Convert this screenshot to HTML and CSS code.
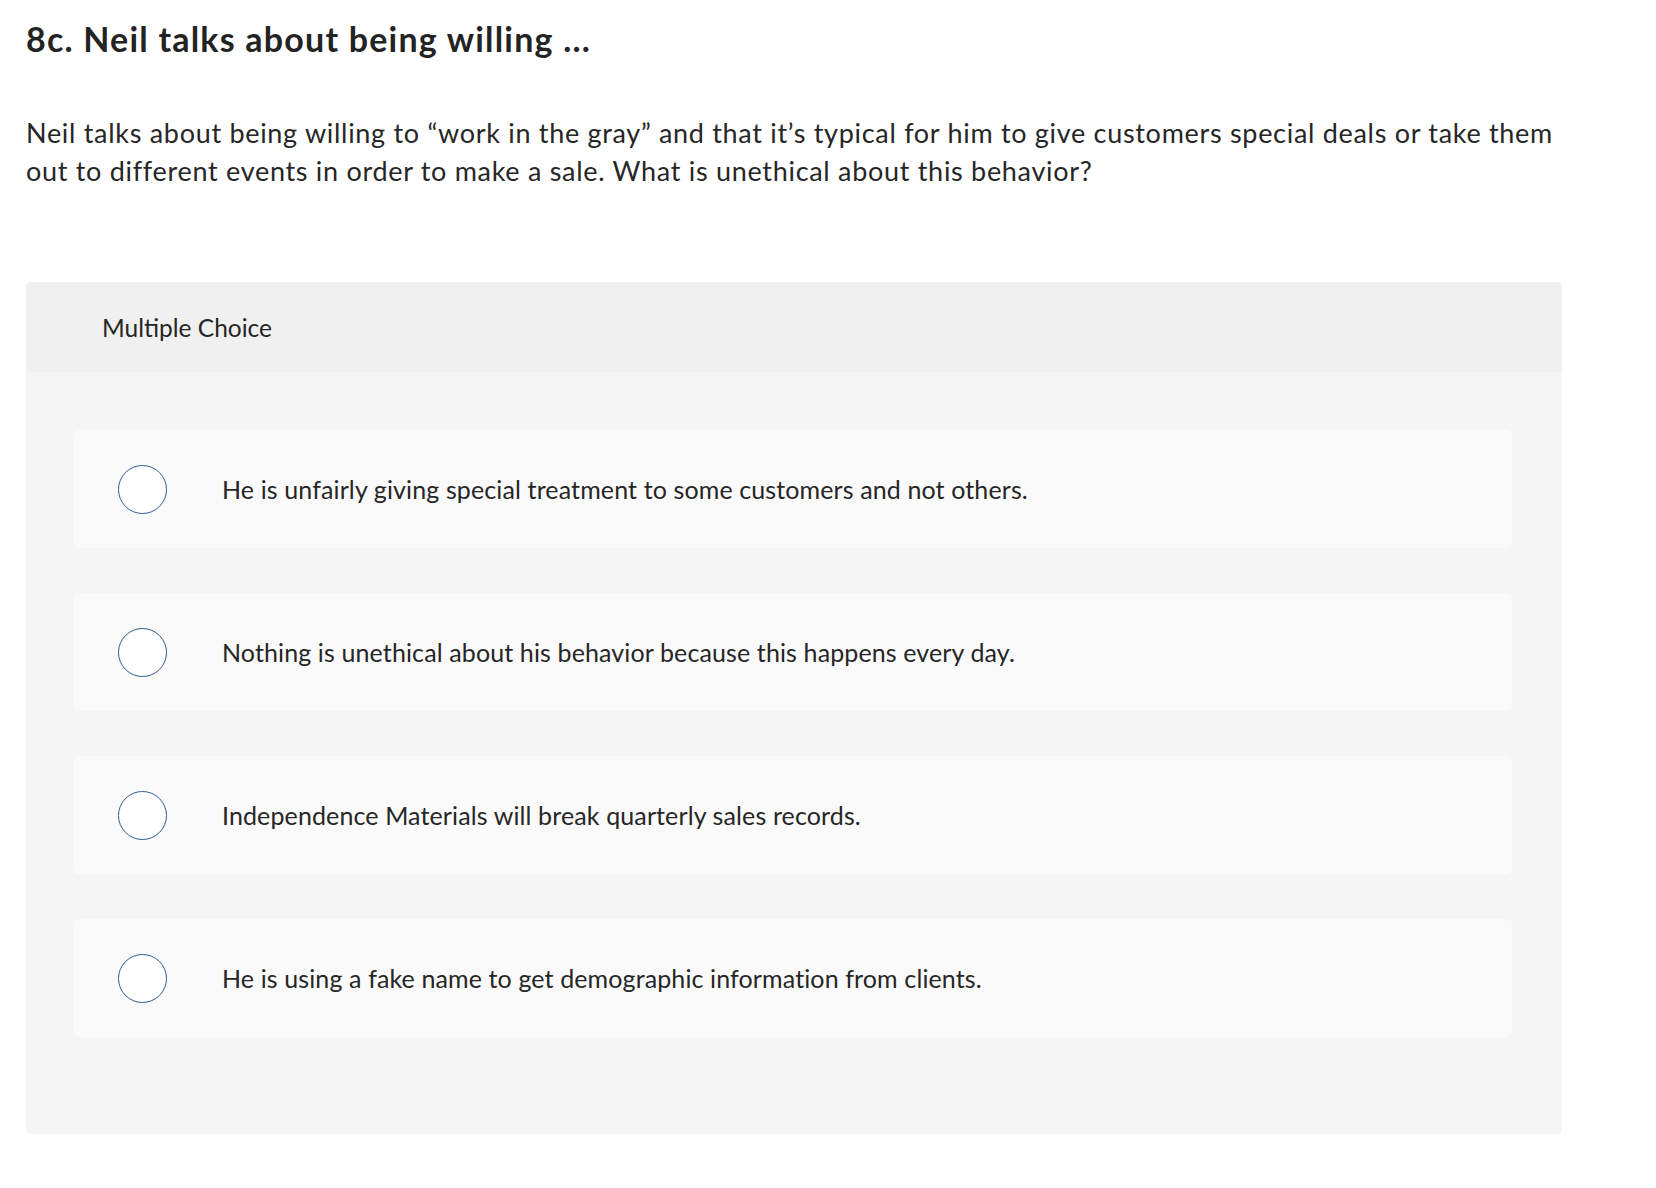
FILE: index.html
```html
<!DOCTYPE html>
<html lang="en">
<head>
<meta charset="utf-8">
<title>8c. Neil talks about being willing ...</title>
<link rel="stylesheet" href="styles.css">
</head>
<body>
<main class="page">
  <h1 class="title">8c. Neil talks about being willing ...</h1>
  <p class="prompt">Neil talks about being willing to “work in the gray” and that it’s typical for him to give customers special deals or take them out to different events in order to make a sale. What is unethical about this behavior?</p>
  <section class="question">
    <div class="question-head">Multiple Choice</div>
    <div class="choices">
      <label class="choice"><span class="radio"></span><span class="choice-text">He is unfairly giving special treatment to some customers and not others.</span></label>
      <label class="choice"><span class="radio"></span><span class="choice-text">Nothing is unethical about his behavior because this happens every day.</span></label>
      <label class="choice"><span class="radio"></span><span class="choice-text">Independence Materials will break quarterly sales records.</span></label>
      <label class="choice"><span class="radio"></span><span class="choice-text">He is using a fake name to get demographic information from clients.</span></label>
    </div>
  </section>
</main>
</body>
</html>
```

FILE: styles.css
```css
html, body {
  margin: 0;
  padding: 0;
  background: #ffffff;
}

body {
  font-family: "Lato", "Liberation Sans", sans-serif;
  color: #262626;
}

.page {
  width: 1536px;
  padding: 0 0 0 26px;
}

.title {
  margin: 19px 0 0 0;
  font-size: 34px;
  line-height: 40px;
  font-weight: 700;
  letter-spacing: 1.2px;
  color: #232323;
}

.prompt {
  margin: 55px 0 0 0;
  font-size: 27px;
  line-height: 38px;
  letter-spacing: 0.7px;
  font-weight: 400;
}

.question {
  margin-top: 92px;
  background: #f5f5f5;
  border-radius: 5px;
  overflow: hidden;
}

.question-head {
  height: 90px;
  display: flex;
  align-items: center;
  padding-left: 76px;
  background: #f0f0f0;
  font-size: 24.5px;
}

.choices {
  display: flex;
  flex-direction: column;
  gap: 45px;
  padding: 58px 50px 97px 47px;
}

.choice {
  height: 118px;
  display: flex;
  align-items: center;
  padding-left: 45px;
  background: #fafafa;
  border-radius: 6px;
}

.radio {
  flex: none;
  width: 47px;
  height: 47px;
  border: 1.5px solid #2f5b8e;
  border-radius: 50%;
  background: #ffffff;
  margin-right: 55px;
}

.choice-text {
  font-size: 25px;
  line-height: 32px;
  letter-spacing: 0.12px;
}
```
